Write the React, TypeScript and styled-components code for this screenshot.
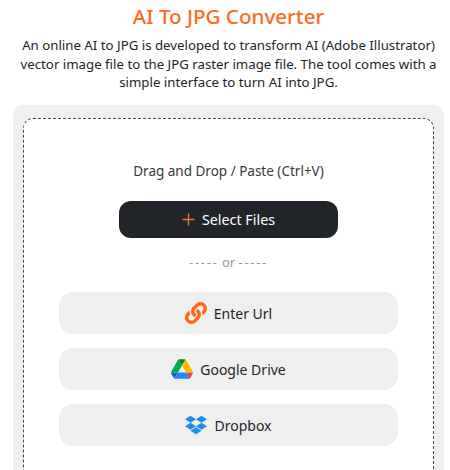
import React from "react"
import styled, { createGlobalStyle } from "styled-components"
import { FaLink, FaDropbox } from "react-icons/fa"

const GlobalStyle = createGlobalStyle`
  html, body {
    margin: 0;
    padding: 0;
    height: 470px;
    overflow: hidden;
    background: #fff;
  }
  body {
    font-family: "Noto Sans", "Open Sans", sans-serif;
    color: #212529;
  }
`

const Page = styled.main`
  display: flex;
  flex-direction: column;
  align-items: center;
  width: 431px;
  height: 470px;
  margin-left: 13px;
  overflow: hidden;
`

const Title = styled.h1`
  margin: 1px 0 0;
  font-size: 20.6px;
  line-height: 30px;
  font-weight: 500;
  color: #ff6a25;
  text-align: center;
`

const Intro = styled.p`
  margin: 5px 0 0;
  font-size: 13.25px;
  line-height: 18.5px;
  text-align: center;
  white-space: nowrap;
  color: #212529;
`

const Card = styled.section`
  box-sizing: border-box;
  flex: none;
  width: 431px;
  height: 365px;
  margin-top: 13px;
  padding: 13px 10px 0;
  overflow: hidden;
  background: #efefef;
  border-radius: 10px 10px 0 0;
`

const DropZone = styled.div`
  box-sizing: border-box;
  height: 400px;
  background: #fff;
  border: 1.5px dashed #444;
  border-radius: 10px;
  display: flex;
  flex-direction: column;
  align-items: center;
  padding-top: 43px;
`

const Hint = styled.p`
  margin: 0;
  font-size: 13.5px;
  line-height: 18px;
  color: #33393f;
`

const SelectButton = styled.button`
  display: flex;
  align-items: center;
  justify-content: center;
  gap: 7px;
  width: 219px;
  height: 37px;
  margin-top: 21px;
  border: 0;
  border-radius: 12px;
  background: #212529;
  color: #fff;
  font: 400 14.3px "Noto Sans", sans-serif;
`

const Plus = styled.svg`
  width: 13px;
  height: 13px;
  color: #f0702c;
`

const Or = styled.p`
  margin: 15px 0 0;
  font-size: 13px;
  line-height: 18px;
  color: #999;
`

const Dashes = styled.span`
  letter-spacing: 1.7px;
`

const Options = styled.div`
  display: flex;
  flex-direction: column;
  gap: 14px;
  margin-top: 21px;
`

const Option = styled.button`
  display: flex;
  align-items: center;
  justify-content: center;
  gap: 7px;
  width: 339px;
  height: 42px;
  border: 0;
  border-radius: 14px;
  background: #efefef;
  color: #212529;
  font: 400 14px "Noto Sans", sans-serif;
`

const OptionLabel = styled.span`
  padding-top: 2px;
`

const LinkIcon = styled(FaLink)`
  font-size: 22px;
  color: #ff6a13;
`

const DropboxIcon = styled(FaDropbox)`
  font-size: 22px;
  color: #1f8ceb;
`

const DriveSvg = styled.svg`
  width: 22px;
  height: 20px;
`

const DriveIcon = () => (
  <DriveSvg viewBox="0 0 87.3 78">
    <path d="m6.6 66.85 3.85 6.65c.8 1.4 1.95 2.5 3.3 3.3l13.75-23.8H0c0 1.55.4 3.1 1.2 4.5z" fill="#0066da" />
    <path d="M43.65 25 29.9 1.2c-1.35.8-2.5 1.9-3.3 3.3L1.2 48.5A9 9 0 0 0 0 53h27.5z" fill="#00ac47" />
    <path d="M73.55 76.8c1.35-.8 2.5-1.9 3.3-3.3l1.6-2.75 7.65-13.25c.8-1.4 1.2-2.95 1.2-4.5H59.8l5.85 11.5z" fill="#ea4335" />
    <path d="M43.65 25 57.4 1.2C56.05.4 54.5 0 52.9 0H34.4c-1.6 0-3.15.45-4.5 1.2z" fill="#00832d" />
    <path d="M59.8 53H27.5L13.75 76.8c1.35.8 2.9 1.2 4.5 1.2h50.8c1.6 0 3.15-.45 4.5-1.2z" fill="#2684fc" />
    <path d="M73.4 26.5 60.7 4.5c-.8-1.4-1.95-2.5-3.3-3.3L43.65 25 59.8 53h27.45c0-1.55-.4-3.1-1.2-4.5z" fill="#ffba00" />
  </DriveSvg>
)

export default function App() {
  return (
    <>
      <GlobalStyle />
      <Page>
        <Title>AI To JPG Converter</Title>
        <Intro>
          An online AI to JPG is developed to transform AI (Adobe Illustrator)
          <br />
          vector image file to the JPG raster image file. The tool comes with a
          <br />
          simple interface to turn AI into JPG.
        </Intro>
        <Card>
          <DropZone>
            <Hint>Drag and Drop / Paste (Ctrl+V)</Hint>
            <SelectButton>
              <Plus viewBox="0 0 13 13" fill="none" stroke="currentColor" strokeWidth="1.4">
                <path d="M6.5 0.5v12M0.5 6.5h12" />
              </Plus>
              Select Files
            </SelectButton>
            <Or>
              <Dashes>-----</Dashes> or <Dashes>-----</Dashes>
            </Or>
            <Options>
              <Option>
                <LinkIcon />
                <OptionLabel>Enter Url</OptionLabel>
              </Option>
              <Option>
                <DriveIcon />
                <OptionLabel>Google Drive</OptionLabel>
              </Option>
              <Option>
                <DropboxIcon />
                <OptionLabel>Dropbox</OptionLabel>
              </Option>
            </Options>
          </DropZone>
        </Card>
      </Page>
    </>
  )
}
